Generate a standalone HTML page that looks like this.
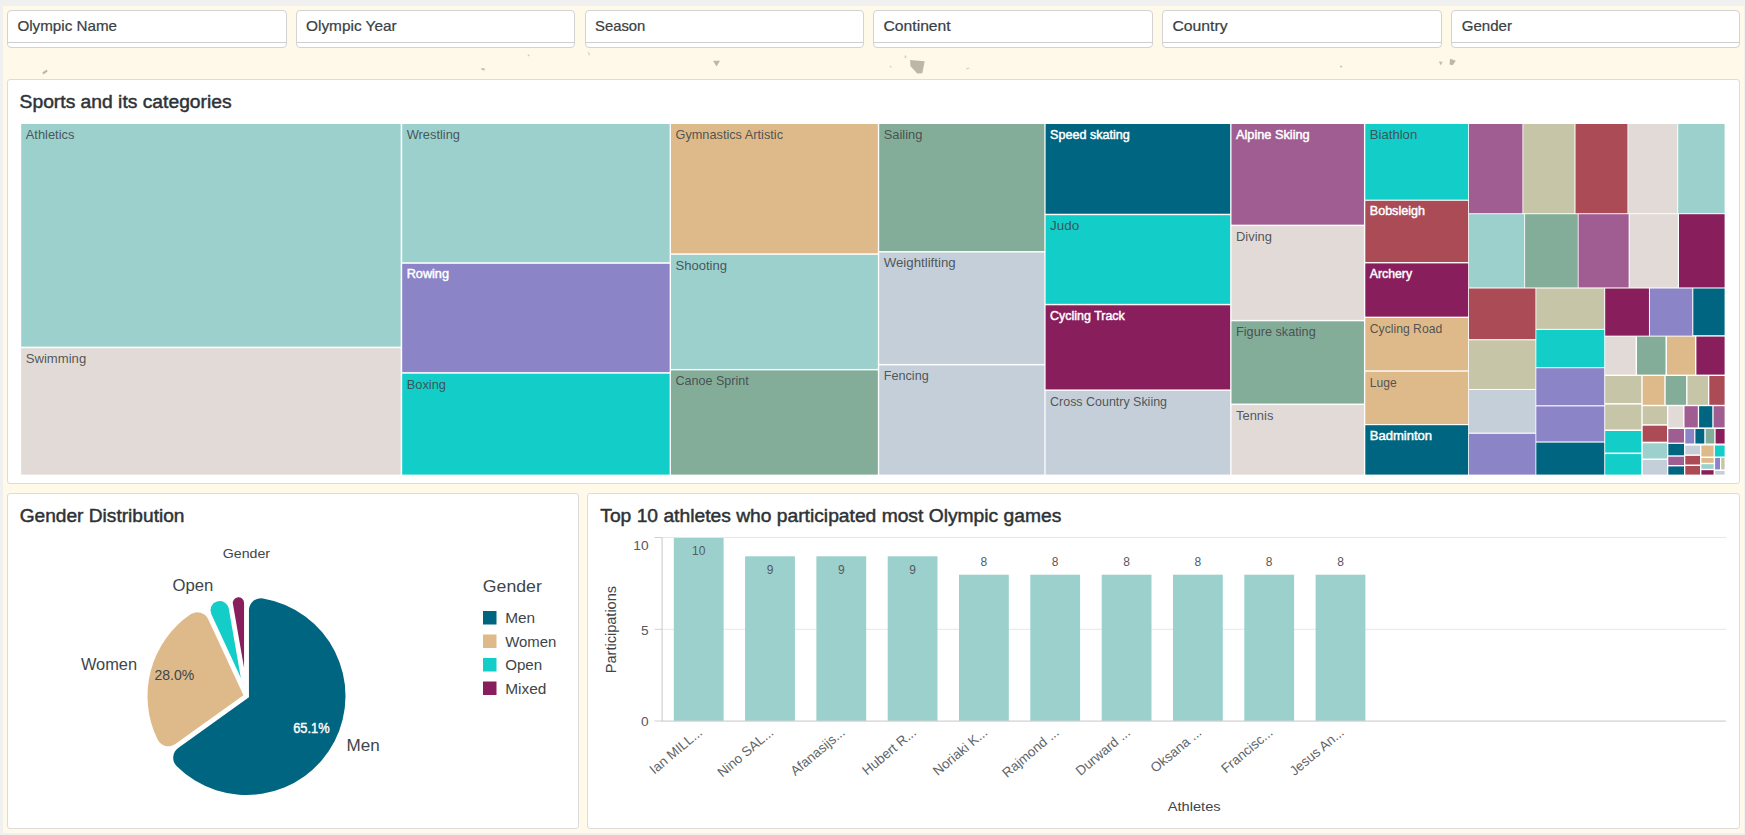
<!DOCTYPE html>
<html><head><meta charset="utf-8"><title>Olympics dashboard</title>
<style>
*{box-sizing:border-box;margin:0;padding:0}
html,body{width:1745px;height:835px;overflow:hidden;background:#f0f0f0;font-family:"Liberation Sans",sans-serif;}
#cream{position:absolute;left:3px;top:6px;width:1741px;height:827px;background:#fef9e8;}
.filter{position:absolute;top:10px;height:38px;background:#fff;border:1px solid #d3d3d3;border-radius:4px;overflow:hidden}
.filter .lab{position:absolute;left:9px;top:7px;font-size:15px;color:#3a3f45;font-weight:400;letter-spacing:0;white-space:nowrap;-webkit-text-stroke:0.35px #3a3f45}
.filter .ln{position:absolute;left:0;right:0;top:30.5px;height:1.5px;background:#cfcfcf}
.panel{position:absolute;background:#fff;border:1px solid #dcdcdc;border-radius:3px;}
.ptitle{position:absolute;left:11px;top:11px;font-size:18px;color:#2f3337;white-space:nowrap;-webkit-text-stroke:0.45px #2f3337}
svg{position:absolute;left:0;top:0;overflow:visible}
svg text{font-family:"Liberation Sans",sans-serif}
</style></head><body>
<div id="cream"></div>

<svg width="1745" height="835" viewBox="0 0 1745 835">
<path d="M910.1,60 L924.7,61.3 L922.3,73.2 L917.2,73.6 L910.4,66.1Z" fill="#bcb8a8"/>
<path d="M713,60.8 L720,60.8 L716.5,66.5Z" fill="#bcb8a8"/>
<path d="M1450,58.8 L1455.8,60.8 L1452.6,65.2 L1449.6,64.6Z" fill="#bcb8a8"/>
<path d="M1438.8,61.5 L1442.6,61.8 L1440.8,65.4Z" fill="#c2beae"/>
<path d="M42.3,72.6 L46.8,69.4 L47.6,71.4 L43.4,74.6Z" fill="#bdb9a9"/>
<path d="M481,68 L485,68.4 L484.6,70.6 L481.8,70Z" fill="#c4c0b0"/>
<path d="M904.2,57.8 L905.4,54.8 L906.8,57.8Z" fill="#d2cebd"/>
<path d="M1339.8,65.6 L1342.4,66 L1342,67.6 L1340.2,67.2Z" fill="#c9c5b5"/>
<path d="M527.8,54.6 L529.4,54.6 L529.4,56.2 L527.8,56.2Z" fill="#cfcbbb"/>
<path d="M587.6,51 L589.6,53.6 L589.8,55.4 L588.8,55.2Z" fill="#d0ccbc"/>
<path d="M966,68.6 L969,67.6 L969.4,68.6 L966.6,69.6Z" fill="#d2cebd"/>
<path d="M889.8,65.8 L891.4,66 L891.4,67.6 L890,67.4Z" fill="#d6d2c1"/>
</svg>
<div class="filter" style="left:7.0px;width:279.5px"><div class="ln"></div></div>
<div class="filter" style="left:295.8px;width:279.5px"><div class="ln"></div></div>
<div class="filter" style="left:584.6px;width:279.5px"><div class="ln"></div></div>
<div class="filter" style="left:873.4px;width:279.5px"><div class="ln"></div></div>
<div class="filter" style="left:1162.2px;width:279.5px"><div class="ln"></div></div>
<div class="filter" style="left:1451.0px;width:288.5px"><div class="ln"></div></div>
<div class="panel" style="left:7px;top:79px;width:1733px;height:405px"></div>
<div class="panel" style="left:7px;top:493px;width:572px;height:336px"></div>
<div class="panel" style="left:587px;top:493px;width:1153px;height:336px"></div>
<svg width="1745" height="835" viewBox="0 0 1745 835">
<text x="19.6" y="107.8" textLength="212" font-size="18" fill="#2e3236" stroke="#2e3236" stroke-width="0.45" lengthAdjust="spacingAndGlyphs">Sports and its categories</text>
<text x="19.7" y="521.8" textLength="164.8" font-size="18" fill="#2e3236" stroke="#2e3236" stroke-width="0.45" lengthAdjust="spacingAndGlyphs">Gender Distribution</text>
<text x="600.3" y="521.8" textLength="461" font-size="18" fill="#2e3236" stroke="#2e3236" stroke-width="0.45" lengthAdjust="spacingAndGlyphs">Top 10 athletes who participated most Olympic games</text>
<text x="17.4" y="31.3" textLength="99.6" font-size="15" fill="#3a3f45" stroke="#3a3f45" stroke-width="0.22" lengthAdjust="spacingAndGlyphs">Olympic Name</text>
<text x="306" y="31.3" textLength="90.7" font-size="15" fill="#3a3f45" stroke="#3a3f45" stroke-width="0.22" lengthAdjust="spacingAndGlyphs">Olympic Year</text>
<text x="595" y="31.3" textLength="50.3" font-size="15" fill="#3a3f45" stroke="#3a3f45" stroke-width="0.22" lengthAdjust="spacingAndGlyphs">Season</text>
<text x="883.5" y="31.3" textLength="67.2" font-size="15" fill="#3a3f45" stroke="#3a3f45" stroke-width="0.22" lengthAdjust="spacingAndGlyphs">Continent</text>
<text x="1172.4" y="31.3" textLength="55.2" font-size="15" fill="#3a3f45" stroke="#3a3f45" stroke-width="0.22" lengthAdjust="spacingAndGlyphs">Country</text>
<text x="1461.8" y="31.3" textLength="50.2" font-size="15" fill="#3a3f45" stroke="#3a3f45" stroke-width="0.22" lengthAdjust="spacingAndGlyphs">Gender</text>
<g shape-rendering="auto">
<rect x="21.20" y="124.00" width="379.45" height="222.65" fill="#9bd0cc"/>
<rect x="21.20" y="348.20" width="379.45" height="126.40" fill="#e1dad6"/>
<rect x="402.20" y="124.00" width="267.45" height="138.25" fill="#9bd0cc"/>
<rect x="402.20" y="263.80" width="267.45" height="108.35" fill="#8b84c7"/>
<rect x="402.20" y="373.70" width="267.45" height="100.90" fill="#13cdc9"/>
<rect x="671.00" y="124.00" width="206.85" height="129.35" fill="#deba8b"/>
<rect x="671.00" y="254.80" width="206.85" height="114.15" fill="#9bd0cc"/>
<rect x="671.00" y="370.40" width="206.85" height="104.20" fill="#84ad99"/>
<rect x="879.20" y="124.00" width="165.15" height="127.05" fill="#84ad99"/>
<rect x="879.20" y="252.50" width="165.15" height="111.45" fill="#c5cfd9"/>
<rect x="879.20" y="365.40" width="165.15" height="109.20" fill="#c5cfd9"/>
<rect x="1045.60" y="124.00" width="184.55" height="89.75" fill="#006580"/>
<rect x="1045.60" y="215.20" width="184.55" height="88.65" fill="#13cdc9"/>
<rect x="1045.60" y="305.30" width="184.55" height="84.15" fill="#891e5d"/>
<rect x="1045.60" y="390.90" width="184.55" height="83.70" fill="#c5cfd9"/>
<rect x="1231.50" y="124.00" width="132.45" height="100.65" fill="#a05d91"/>
<rect x="1231.50" y="226.10" width="132.45" height="93.75" fill="#e1dad6"/>
<rect x="1231.50" y="321.30" width="132.45" height="82.25" fill="#84ad99"/>
<rect x="1231.50" y="405.00" width="132.45" height="69.60" fill="#e1dad6"/>
<rect x="1365.30" y="124.00" width="102.85" height="75.65" fill="#13cdc9"/>
<rect x="1365.30" y="200.80" width="102.85" height="61.25" fill="#ab4b56"/>
<rect x="1365.30" y="263.40" width="102.85" height="53.25" fill="#891e5d"/>
<rect x="1365.30" y="318.00" width="102.85" height="52.35" fill="#deba8b"/>
<rect x="1365.30" y="371.70" width="102.85" height="52.35" fill="#deba8b"/>
<rect x="1365.30" y="425.20" width="102.85" height="49.40" fill="#006580"/>
<rect x="1469.00" y="124.00" width="53.45" height="89.25" fill="#a05d91"/>
<rect x="1523.30" y="124.00" width="51.15" height="89.25" fill="#c7c5a7"/>
<rect x="1575.50" y="124.00" width="51.95" height="89.25" fill="#ab4b56"/>
<rect x="1628.30" y="124.00" width="48.95" height="89.25" fill="#e1dad6"/>
<rect x="1678.20" y="124.00" width="46.40" height="89.25" fill="#9bd0cc"/>
<rect x="1469.00" y="214.20" width="55.25" height="73.25" fill="#9bd0cc"/>
<rect x="1525.10" y="214.20" width="52.65" height="73.25" fill="#84ad99"/>
<rect x="1578.60" y="214.20" width="50.05" height="73.25" fill="#a05d91"/>
<rect x="1629.70" y="214.20" width="48.15" height="73.25" fill="#e1dad6"/>
<rect x="1679.00" y="214.20" width="45.60" height="73.25" fill="#891e5d"/>
<rect x="1469.00" y="288.50" width="66.45" height="50.65" fill="#ab4b56"/>
<rect x="1469.00" y="340.30" width="66.45" height="48.65" fill="#c7c5a7"/>
<rect x="1469.00" y="390.00" width="66.45" height="42.65" fill="#c5cfd9"/>
<rect x="1469.00" y="433.80" width="66.45" height="40.80" fill="#8b84c7"/>
<rect x="1536.30" y="288.50" width="67.95" height="40.35" fill="#c7c5a7"/>
<rect x="1536.30" y="329.90" width="67.95" height="37.25" fill="#13cdc9"/>
<rect x="1536.30" y="368.20" width="67.95" height="37.05" fill="#8b84c7"/>
<rect x="1536.30" y="406.40" width="67.95" height="35.05" fill="#8b84c7"/>
<rect x="1536.30" y="442.60" width="67.95" height="32.00" fill="#006580"/>
<rect x="1605.20" y="288.50" width="43.75" height="47.15" fill="#891e5d"/>
<rect x="1650.00" y="288.50" width="42.25" height="47.15" fill="#8b84c7"/>
<rect x="1693.30" y="288.50" width="31.30" height="46.70" fill="#006580"/>
<rect x="1605.20" y="336.60" width="30.40" height="38.00" fill="#e1dad6"/>
<rect x="1637.00" y="336.60" width="28.50" height="38.00" fill="#84ad99"/>
<rect x="1667.00" y="336.60" width="28.00" height="38.00" fill="#deba8b"/>
<rect x="1696.40" y="336.60" width="28.20" height="38.00" fill="#891e5d"/>
<rect x="1605.20" y="376.00" width="36.10" height="27.10" fill="#c7c5a7"/>
<rect x="1605.20" y="404.60" width="36.10" height="24.90" fill="#c7c5a7"/>
<rect x="1605.20" y="431.00" width="36.10" height="21.50" fill="#13cdc9"/>
<rect x="1605.20" y="454.10" width="36.10" height="20.50" fill="#13cdc9"/>
<rect x="1642.70" y="376.00" width="21.60" height="28.80" fill="#deba8b"/>
<rect x="1665.70" y="376.00" width="20.40" height="28.80" fill="#84ad99"/>
<rect x="1687.50" y="376.00" width="20.50" height="28.80" fill="#c7c5a7"/>
<rect x="1709.30" y="376.00" width="15.30" height="28.80" fill="#ab4b56"/>
<rect x="1642.70" y="406.20" width="24.30" height="18.00" fill="#c7c5a7"/>
<rect x="1642.70" y="425.70" width="24.30" height="16.00" fill="#ab4b56"/>
<rect x="1642.70" y="443.30" width="24.30" height="15.20" fill="#9bd0cc"/>
<rect x="1642.70" y="460.00" width="24.30" height="14.60" fill="#c5cfd9"/>
<rect x="1668.30" y="406.20" width="14.90" height="21.20" fill="#e1dad6"/>
<rect x="1684.50" y="406.20" width="13.30" height="21.20" fill="#a05d91"/>
<rect x="1699.10" y="406.20" width="13.20" height="21.20" fill="#006580"/>
<rect x="1713.60" y="406.20" width="11.00" height="21.20" fill="#a05d91"/>
<rect x="1668.30" y="429.00" width="15.70" height="13.60" fill="#a05d91"/>
<rect x="1685.30" y="429.00" width="8.90" height="14.50" fill="#8b84c7"/>
<rect x="1695.40" y="429.00" width="8.90" height="14.50" fill="#006580"/>
<rect x="1705.70" y="429.00" width="8.60" height="14.50" fill="#84ad99"/>
<rect x="1715.60" y="429.00" width="9.00" height="14.50" fill="#891e5d"/>
<rect x="1668.30" y="443.90" width="15.70" height="11.40" fill="#006580"/>
<rect x="1668.30" y="456.70" width="15.70" height="8.30" fill="#a05d91"/>
<rect x="1668.30" y="466.40" width="15.70" height="8.20" fill="#006580"/>
<rect x="1685.30" y="445.60" width="14.70" height="8.80" fill="#c5cfd9"/>
<rect x="1685.30" y="455.90" width="14.70" height="8.60" fill="#ab4b56"/>
<rect x="1685.30" y="466.00" width="14.70" height="8.60" fill="#ab4b56"/>
<rect x="1701.40" y="445.50" width="12.20" height="11.00" fill="#deba8b"/>
<rect x="1701.40" y="458.00" width="12.20" height="4.80" fill="#deba8b"/>
<rect x="1701.40" y="464.20" width="12.20" height="4.60" fill="#9bd0cc"/>
<rect x="1701.40" y="470.20" width="12.20" height="4.40" fill="#891e5d"/>
<rect x="1714.90" y="445.50" width="9.70" height="11.00" fill="#13cdc9"/>
<rect x="1715.10" y="458.00" width="4.90" height="11.40" fill="#8b84c7"/>
<rect x="1721.20" y="458.00" width="3.40" height="11.40" fill="#c7c5a7"/>
<rect x="1715.10" y="471.00" width="9.50" height="3.60" fill="#c5cfd9"/>
<text x="25.7" y="138.9" font-size="12.4" textLength="48.8" lengthAdjust="spacingAndGlyphs" fill="#41474a" fill-opacity="0.9">Athletics</text>
<text x="25.7" y="363.1" font-size="12.4" textLength="60.5" lengthAdjust="spacingAndGlyphs" fill="#41474a" fill-opacity="0.9">Swimming</text>
<text x="406.7" y="138.9" font-size="12.4" textLength="53.3" lengthAdjust="spacingAndGlyphs" fill="#41474a" fill-opacity="0.9">Wrestling</text>
<text x="406.7" y="278.3" font-size="12.4" textLength="42.3" lengthAdjust="spacingAndGlyphs" fill="#fff" stroke="#fff" stroke-width="0.45">Rowing</text>
<text x="406.7" y="388.6" font-size="12.4" textLength="39.3" lengthAdjust="spacingAndGlyphs" fill="#41474a" fill-opacity="0.9">Boxing</text>
<text x="675.5" y="138.9" font-size="12.4" textLength="107.5" lengthAdjust="spacingAndGlyphs" fill="#41474a" fill-opacity="0.9">Gymnastics Artistic</text>
<text x="675.5" y="269.7" font-size="12.4" textLength="51.5" lengthAdjust="spacingAndGlyphs" fill="#41474a" fill-opacity="0.9">Shooting</text>
<text x="675.5" y="385.3" font-size="12.4" textLength="73.3" lengthAdjust="spacingAndGlyphs" fill="#41474a" fill-opacity="0.9">Canoe Sprint</text>
<text x="883.7" y="138.9" font-size="12.4" textLength="38.7" lengthAdjust="spacingAndGlyphs" fill="#41474a" fill-opacity="0.9">Sailing</text>
<text x="883.7" y="267.4" font-size="12.4" textLength="72.0" lengthAdjust="spacingAndGlyphs" fill="#41474a" fill-opacity="0.9">Weightlifting</text>
<text x="883.7" y="380.3" font-size="12.4" textLength="45.1" lengthAdjust="spacingAndGlyphs" fill="#41474a" fill-opacity="0.9">Fencing</text>
<text x="1050.1" y="138.5" font-size="12.4" textLength="79.6" lengthAdjust="spacingAndGlyphs" fill="#fff" stroke="#fff" stroke-width="0.45">Speed skating</text>
<text x="1050.1" y="230.1" font-size="12.4" textLength="29.2" lengthAdjust="spacingAndGlyphs" fill="#41474a" fill-opacity="0.9">Judo</text>
<text x="1050.1" y="319.8" font-size="12.4" textLength="74.7" lengthAdjust="spacingAndGlyphs" fill="#fff" stroke="#fff" stroke-width="0.45">Cycling Track</text>
<text x="1050.1" y="405.8" font-size="12.4" textLength="116.9" lengthAdjust="spacingAndGlyphs" fill="#41474a" fill-opacity="0.9">Cross Country Skiing</text>
<text x="1236.0" y="138.5" font-size="12.4" textLength="73.7" lengthAdjust="spacingAndGlyphs" fill="#fff" stroke="#fff" stroke-width="0.45">Alpine Skiing</text>
<text x="1236.0" y="241.0" font-size="12.4" textLength="36.0" lengthAdjust="spacingAndGlyphs" fill="#41474a" fill-opacity="0.9">Diving</text>
<text x="1236.0" y="336.2" font-size="12.4" textLength="79.7" lengthAdjust="spacingAndGlyphs" fill="#41474a" fill-opacity="0.9">Figure skating</text>
<text x="1236.0" y="419.9" font-size="12.4" textLength="37.4" lengthAdjust="spacingAndGlyphs" fill="#41474a" fill-opacity="0.9">Tennis</text>
<text x="1369.8" y="138.9" font-size="12.4" textLength="47.4" lengthAdjust="spacingAndGlyphs" fill="#41474a" fill-opacity="0.9">Biathlon</text>
<text x="1369.8" y="215.3" font-size="12.4" textLength="55.1" lengthAdjust="spacingAndGlyphs" fill="#fff" stroke="#fff" stroke-width="0.45">Bobsleigh</text>
<text x="1369.8" y="277.9" font-size="12.4" textLength="42.3" lengthAdjust="spacingAndGlyphs" fill="#fff" stroke="#fff" stroke-width="0.45">Archery</text>
<text x="1369.8" y="332.9" font-size="12.4" textLength="72.4" lengthAdjust="spacingAndGlyphs" fill="#41474a" fill-opacity="0.9">Cycling Road</text>
<text x="1369.8" y="386.6" font-size="12.4" textLength="26.9" lengthAdjust="spacingAndGlyphs" fill="#41474a" fill-opacity="0.9">Luge</text>
<text x="1369.8" y="439.7" font-size="12.4" textLength="62.3" lengthAdjust="spacingAndGlyphs" fill="#fff" stroke="#fff" stroke-width="0.45">Badminton</text>
</g>
<g>
<path d="M248.95,697.26L248.95,610.21A12.00,12.00 0 0 1 262.94,598.38A99.0,99.0 0 1 1 176.74,766.25A12.00,12.00 0 0 1 178.21,747.98Z" fill="#006580"/>
<path d="M243.43,695.19L175.35,744.00A12.00,12.00 0 0 1 157.58,739.52A99.0,99.0 0 0 1 190.57,614.31A12.00,12.00 0 0 1 208.24,619.17Z" fill="#deba8b"/>
<path d="M240.87,678.01L211.28,614.09A9.12,9.12 0 0 1 216.83,601.55A99.0,99.0 0 0 1 217.06,601.48A9.12,9.12 0 0 1 228.76,608.62Z" fill="#13cdc9"/>
<path d="M244.05,667.71L232.92,603.92A5.60,5.60 0 0 1 237.95,597.37A99.0,99.0 0 0 1 237.96,597.37A5.60,5.60 0 0 1 244.05,602.95Z" fill="#891e5d"/>
<text x="222.8" y="557.8" font-size="13.5" textLength="47.3" fill="#40454a" lengthAdjust="spacingAndGlyphs">Gender</text>
<text x="172.6" y="591" font-size="16" textLength="40.8" fill="#40454a" lengthAdjust="spacingAndGlyphs">Open</text>
<text x="80.9" y="670" font-size="16" textLength="56.2" fill="#40454a" lengthAdjust="spacingAndGlyphs">Women</text>
<text x="346.5" y="751" font-size="16" textLength="33.2" fill="#40454a" lengthAdjust="spacingAndGlyphs">Men</text>
<text x="154.4" y="680" font-size="14" textLength="39.8" fill="#40454a" lengthAdjust="spacingAndGlyphs">28.0%</text>
<text x="293.2" y="733" font-size="14" textLength="36.5" lengthAdjust="spacingAndGlyphs" fill="#fff" stroke="#fff" stroke-width="0.4">65.1%</text>
<text x="482.8" y="592" font-size="17" textLength="59" fill="#40454a" lengthAdjust="spacingAndGlyphs">Gender</text>
<rect x="483" y="611.0" width="13.5" height="13.5" fill="#006580"/>
<text x="505.2" y="623.2" font-size="15.3" textLength="30" fill="#40454a" lengthAdjust="spacingAndGlyphs">Men</text>
<rect x="483" y="634.5" width="13.5" height="13.5" fill="#deba8b"/>
<text x="505.2" y="646.7" font-size="15.3" textLength="51.2" fill="#40454a" lengthAdjust="spacingAndGlyphs">Women</text>
<rect x="483" y="658.0" width="13.5" height="13.5" fill="#13cdc9"/>
<text x="505.2" y="670.2" font-size="15.3" textLength="37" fill="#40454a" lengthAdjust="spacingAndGlyphs">Open</text>
<rect x="483" y="681.5" width="13.5" height="13.5" fill="#891e5d"/>
<text x="505.2" y="693.7" font-size="15.3" textLength="41.2" fill="#40454a" lengthAdjust="spacingAndGlyphs">Mixed</text>
</g>
<g>
<rect x="662.5" y="537.0" width="1063.5" height="1" fill="#e6e6e6"/>
<rect x="662.5" y="628.8" width="1063.5" height="1" fill="#e6e6e6"/>
<rect x="673.8" y="538.0" width="49.8" height="183.0" fill="#9bd0cc"/>
<text x="698.7" y="554.9" font-size="12" text-anchor="middle" fill="#555a5f">10</text>
<text transform="translate(703.2,733.8) rotate(-40)" font-size="13.5" text-anchor="end" fill="#606468">Ian MILL...</text>
<rect x="745.1" y="556.3" width="49.8" height="164.7" fill="#9bd0cc"/>
<text x="770.0" y="573.9" font-size="12" text-anchor="middle" fill="#555a5f">9</text>
<text transform="translate(774.5,733.8) rotate(-40)" font-size="13.5" text-anchor="end" fill="#606468">Nino SAL...</text>
<rect x="816.4" y="556.3" width="49.8" height="164.7" fill="#9bd0cc"/>
<text x="841.3" y="573.9" font-size="12" text-anchor="middle" fill="#555a5f">9</text>
<text transform="translate(845.8,733.8) rotate(-40)" font-size="13.5" text-anchor="end" fill="#606468">Afanasijs...</text>
<rect x="887.7" y="556.3" width="49.8" height="164.7" fill="#9bd0cc"/>
<text x="912.6" y="573.9" font-size="12" text-anchor="middle" fill="#555a5f">9</text>
<text transform="translate(917.1,733.8) rotate(-40)" font-size="13.5" text-anchor="end" fill="#606468">Hubert R...</text>
<rect x="959.0" y="574.7" width="49.8" height="146.3" fill="#9bd0cc"/>
<text x="983.9" y="565.7" font-size="12" text-anchor="middle" fill="#555a5f">8</text>
<text transform="translate(988.4,733.8) rotate(-40)" font-size="13.5" text-anchor="end" fill="#606468">Noriaki K...</text>
<rect x="1030.3" y="574.7" width="49.8" height="146.3" fill="#9bd0cc"/>
<text x="1055.2" y="565.7" font-size="12" text-anchor="middle" fill="#555a5f">8</text>
<text transform="translate(1059.8,733.8) rotate(-40)" font-size="13.5" text-anchor="end" fill="#606468">Rajmond ...</text>
<rect x="1101.7" y="574.7" width="49.8" height="146.3" fill="#9bd0cc"/>
<text x="1126.6" y="565.7" font-size="12" text-anchor="middle" fill="#555a5f">8</text>
<text transform="translate(1131.1,733.8) rotate(-40)" font-size="13.5" text-anchor="end" fill="#606468">Durward ...</text>
<rect x="1173.0" y="574.7" width="49.8" height="146.3" fill="#9bd0cc"/>
<text x="1197.9" y="565.7" font-size="12" text-anchor="middle" fill="#555a5f">8</text>
<text transform="translate(1202.4,733.8) rotate(-40)" font-size="13.5" text-anchor="end" fill="#606468">Oksana ...</text>
<rect x="1244.3" y="574.7" width="49.8" height="146.3" fill="#9bd0cc"/>
<text x="1269.2" y="565.7" font-size="12" text-anchor="middle" fill="#555a5f">8</text>
<text transform="translate(1273.7,733.8) rotate(-40)" font-size="13.5" text-anchor="end" fill="#606468">Francisc...</text>
<rect x="1315.6" y="574.7" width="49.8" height="146.3" fill="#9bd0cc"/>
<text x="1340.5" y="565.7" font-size="12" text-anchor="middle" fill="#555a5f">8</text>
<text transform="translate(1345.0,733.8) rotate(-40)" font-size="13.5" text-anchor="end" fill="#606468">Jesus An...</text>
<rect x="661.4" y="537.0" width="1.4" height="184.5" fill="#d9d9d9"/>
<rect x="662.0" y="720.5" width="1064.0" height="1.2" fill="#d0d0d0"/>
<rect x="654.5" y="537.0" width="8" height="1" fill="#d0d0d0"/>
<text x="648.6" y="550.1" font-size="13.7" text-anchor="end" fill="#54595e">10</text>
<rect x="654.5" y="628.8" width="8" height="1" fill="#d0d0d0"/>
<text x="648.6" y="634.5" font-size="13.7" text-anchor="end" fill="#54595e">5</text>
<rect x="654.5" y="720.5" width="8" height="1" fill="#d0d0d0"/>
<text x="648.6" y="726.3" font-size="13.7" text-anchor="end" fill="#54595e">0</text>
<text transform="translate(616.2,629.6) rotate(-90)" font-size="13.8" textLength="87.3" lengthAdjust="spacingAndGlyphs" text-anchor="middle" fill="#40454a">Participations</text>
<text x="1194.2" y="810.8" font-size="13.5" textLength="53" lengthAdjust="spacingAndGlyphs" text-anchor="middle" fill="#40454a">Athletes</text>
</g>
</svg>
</body></html>
